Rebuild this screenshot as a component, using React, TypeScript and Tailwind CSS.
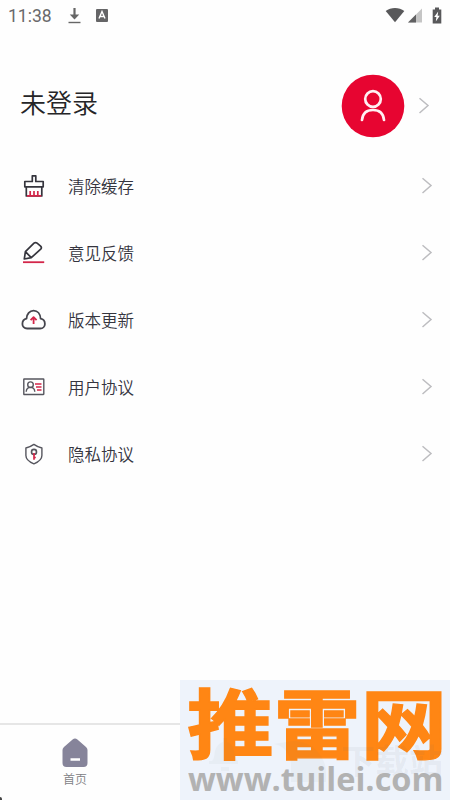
import React from "react";

const cjk = "font-['Noto_Sans_CJK_SC',sans-serif]";

function Chevron() {
  return (
    <svg className="block h-[18px] w-[12px] shrink-0" viewBox="0 0 12 18" fill="none" stroke="#bdbdc0" strokeWidth="1.5">
      <path d="M1.5 1.2 10 8.500l-8.500 7.500" />
    </svg>
  );
}

function BrushIcon() {
  return (
    <svg className="block h-6 w-6" viewBox="0 0 24 24" fill="none" stroke="#35353d" strokeWidth="1.7" strokeLinejoin="round">
      <path d="M10.300 7.500V1.800h3.500v5.700h7.400v5.300H2.800V7.500zM4.300 12.800v9.200h15.500v-9.200" />
      <path d="M8.200 21.500v-4.500M12 21.500v-4.500M15.800 21.500v-4.500M5 21.900h14.200" stroke="#d32649" />
    </svg>
  );
}

function PencilIcon() {
  return (
    <svg className="block h-6 w-6" viewBox="0 0 24 24" fill="none" stroke="#35353d" strokeWidth="1.7" strokeLinejoin="round">
      <path d="M2.300 18 3.400 10.700l8.600-8.500q1.500-1.300 3.100 0l3.500 2.900q1.500 1.500.1 3L9.300 16.700zM3.400 10.700l5.900 6" />
      <path d="M1 21.200h21.200" stroke="#d32649" strokeWidth="1.800" />
    </svg>
  );
}

function CloudIcon() {
  return (
    <svg className="block h-6 w-6 overflow-visible" viewBox="0 0 24 24" fill="none" stroke="#45454d" strokeWidth="1.800" strokeLinejoin="round">
      <path d="M5.100 20.500C2.200 20.500.4 18.500.4 15.900c0-2.800 1.800-4.700 4.100-5.200C4.700 5.900 7.700 2.600 11.600 2.600s6.700 3.300 7 8.100c2.500.4 4.300 2.500 4.300 5.200 0 2.600-2 4.600-4.700 4.600z" />
      <path d="M11.600 16V9.500M8.600 12.200l3-3 3 3" stroke="#d32649" strokeWidth="1.800" />
    </svg>
  );
}

function CardIcon() {
  return (
    <svg className="block h-6 w-6" viewBox="0 0 24 24" fill="none" stroke="#56565e" strokeWidth="1.4">
      <rect x="1.800" y="4" width="20" height="15.500" rx=".4" />
      <circle cx="8.500" cy="9.700" r="2.800" />
      <path d="M4.200 16.700c.2-2.700 1.900-4.300 4.300-4.300s4.100 1.600 4.300 4.300" />
      <path d="M13 9h6.500M14 12h5.500M15 15h4.500" stroke="#d32649" />
    </svg>
  );
}

function ShieldIcon() {
  return (
    <svg className="block h-6 w-6" viewBox="0 0 24 24" fill="none" stroke="#56565e" strokeWidth="1.400" strokeLinejoin="round">
      <path d="M11.900 2.400c2.300 1.700 4.900 2.800 8 3.600v7.500c0 3.900-3.100 6.300-8 8.300-4.900-2-8-4.400-8-8.300V6c3.100-.8 5.700-1.900 8-3.600z" />
      <circle cx="12" cy="9.900" r="2.500" strokeWidth="1.600" />
      <path d="M12 11v6.800M12 15.500h1.800" stroke="#d32649" strokeWidth="1.700" />
    </svg>
  );
}

const items = [
  { label: "清除缓存", Icon: BrushIcon },
  { label: "意见反馈", Icon: PencilIcon },
  { label: "版本更新", Icon: CloudIcon },
  { label: "用户协议", Icon: CardIcon },
  { label: "隐私协议", Icon: ShieldIcon },
];

function StatusBar() {
  return (
    <header className="flex h-8 items-center px-2">
      <span className="w-[58px] font-[Roboto,sans-serif] text-[17.5px] font-normal leading-8 text-[#69696b]">11:38</span>
      <svg className="block h-4 w-4" viewBox="0 0 16 16" fill="none" stroke="#666" strokeWidth="2.200">
        <path d="M8.500 0v9" />
        <path d="M3.800 6.500h9.400l-4.700 5z" fill="#666" stroke="none" />
        <path d="M2.500 14.500h12" strokeWidth="1.400" />
      </svg>
      <svg className="ml-[14px] block h-[14px] w-3" viewBox="0 0 12 14">
        <rect width="12" height="13" rx="1" fill="#656567" />
        <path d="m3 9.500 3-7 3 7M4 7.500h4" fill="none" stroke="white" strokeWidth="1.400" />
      </svg>
      <div className="ml-auto flex items-center">
        <svg className="block h-4 w-5" viewBox="0 0 20 16">
          <path d="M.7 3C5.800-1 14.200-1 19.300 3L10 14.300z" fill="#58585a" />
        </svg>
        <svg className="ml-[3px] block h-4 w-[14px]" viewBox="0 0 14 16">
          <path d="M14 .5v14H0z" fill="#c5c5c5" />
          <path d="M8 6.500v8H0z" fill="#606062" />
        </svg>
        <svg className="ml-[10px] block h-[18px] w-[10px]" viewBox="0 0 10 18">
          <path d="M3 .5h4v2h2.300v14H.7v-14H3z" fill="#58585a" />
          <path d="M6.200 4.500 2.200 10h2.200l-.6 4.500 4-5.700H5.600z" fill="white" />
        </svg>
      </div>
    </header>
  );
}

function Watermark() {
  return (
    <div className="absolute bottom-0 right-0 h-[120px] w-[270px] bg-[#eef3fb]">
      <div className={`${cjk} absolute left-[7px] top-[-2px] origin-top-left scale-x-[1.009] scale-y-[.885] whitespace-nowrap text-[86px] font-bold leading-[96px] text-[#ff8614] [-webkit-text-stroke:1.500px_#ff8614]`}>
        推雷网
      </div>
      <svg className="absolute left-[29px] top-[58px] h-[44px] w-[120px]" viewBox="0 0 120 44" fill="#647b75" opacity=".045">
        <path d="M3 23q2-1 3-10 2-7 8-9V0h4v4q6 2 7 9 1 8 4 10v3H0v-3zM12 29h8v4h-8z" />
        <path d="M84 3c18 0 33 14 33 32v9H82V27c0-11-8-20-17-21z" />
      </svg>
      <div className={`${cjk} absolute left-[161px] top-[60px] whitespace-nowrap text-[34px] font-bold leading-[40px] text-[#657174]/[.08]`}>
        下载站
      </div>
      <div className="absolute left-[8px] top-[80px] origin-left scale-x-[.986] whitespace-nowrap font-['Open_Sans','Noto_Sans',sans-serif] text-[33px] font-bold leading-[38px] text-[#b2b2b2]">
        www.tuilei.com
      </div>
    </div>
  );
}

export default function App() {
  return (
    <div className={`${cjk} relative flex h-[800px] w-[450px] flex-col overflow-hidden bg-[#fefefe] font-[350]`}>
      <StatusBar />
      <section className="flex h-[120px] items-center pl-5 pr-5 pt-7">
        <h1 className="mb-[9px] text-[26px] leading-9 text-[#252527]">未登录</h1>
        <svg className="ml-auto block h-16 w-16" viewBox="0 0 64 64" fill="none">
          <circle cx="32" cy="32" r="31.300" fill="#e70531" />
          <g stroke="#fff0f3" strokeWidth="2.700" strokeLinecap="round">
            <circle cx="32" cy="25" r="7.800" />
            <path d="M21 46c.6-6.500 4.700-10 11-10s10.400 3.500 11 10" />
          </g>
        </svg>
        <div className="ml-[13px]"><Chevron /></div>
      </section>
      <nav className="flex flex-col">
        {items.map(({ label, Icon }) => (
          <button key={label} className="flex h-[67.2px] items-center pl-[22px] pr-[17px] text-left">
            <Icon />
            <span className="ml-[22px] text-[16.5px] leading-6 text-[#35353f]">{label}</span>
            <span className="ml-auto"><Chevron /></span>
          </button>
        ))}
      </nav>
      <footer className="mt-auto flex h-[77px] border-t-2 border-[#e6e6e6]">
        <button className="flex w-[150px] flex-col items-center pt-[13px]">
          <svg className="block h-[30px] w-[26px]" viewBox="0 0 26 30">
            <path d="M10.600 1.500q2.400-2 4.800 0L24 9q1.500 1.300 1.500 3v13q0 4-4 4h-17q-4 0-4-4V12q0-1.700 1.500-3z" fill="#86849a" />
            <path d="M8.500 21.500h9.500" stroke="white" strokeWidth="2.500" />
          </svg>
          <span className="mt-[2px] text-[12px] leading-[18px] text-[#808084]">首页</span>
        </button>
      </footer>
      <div className="absolute bottom-0 left-0 h-[3px] w-[2px] rounded-tr-full bg-[#444]" />
      <Watermark />
    </div>
  );
}
